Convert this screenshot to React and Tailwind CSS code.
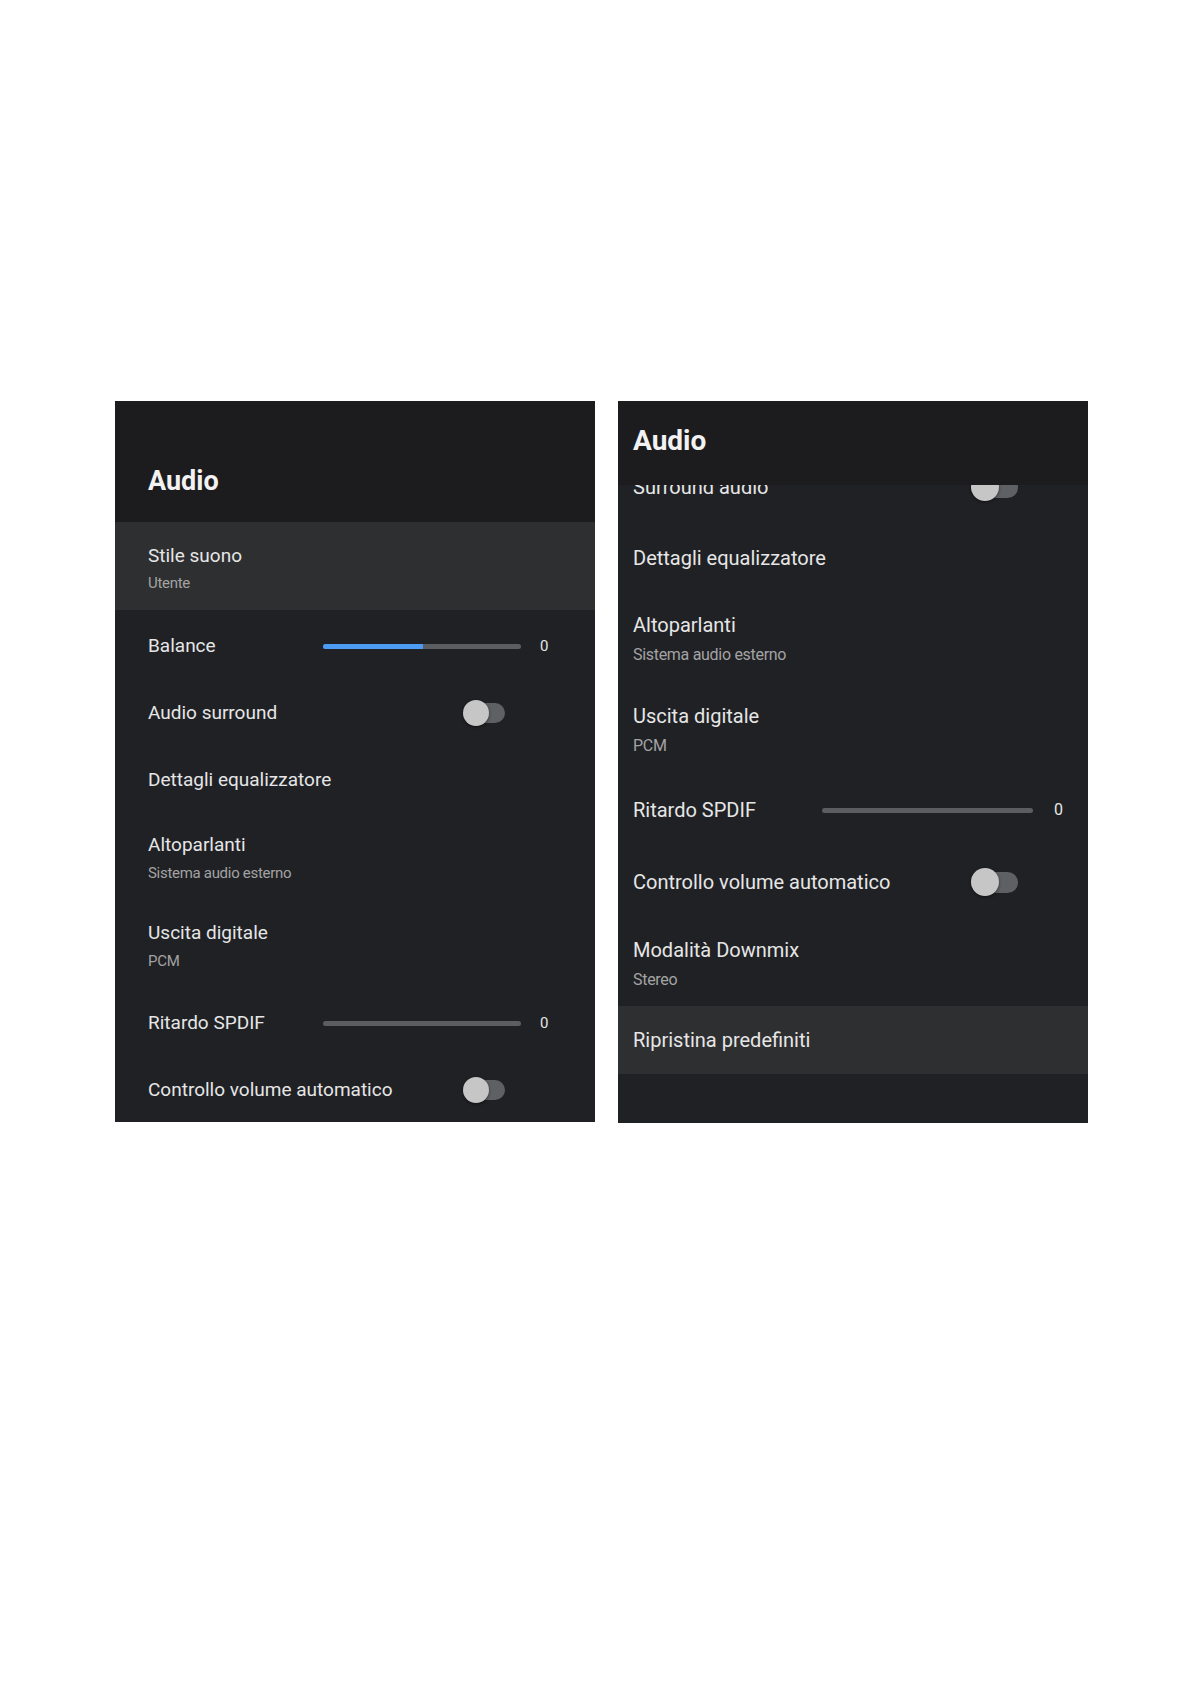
import React from 'react';

const font = { fontFamily: 'Roboto, "Noto Sans", sans-serif' };

function Toggle({ big }) {
  return big ? (
    <div className="relative w-[47px] h-[28px]">
      <div className="absolute left-[14px] top-[4px] w-[33px] h-[21px] rounded-full bg-[#5f6064]"></div>
      <div className="absolute left-0 top-0 w-[28px] h-[28px] rounded-full bg-[#c6c6c6] shadow-[0_1px_3px_rgba(0,0,0,0.5)]"></div>
    </div>
  ) : (
    <div className="relative w-[42px] h-[26px]">
      <div className="absolute left-[13px] top-[3px] w-[29px] h-[20px] rounded-full bg-[#5f6064]"></div>
      <div className="absolute left-0 top-0 w-[26px] h-[26px] rounded-full bg-[#c6c6c6] shadow-[0_1px_3px_rgba(0,0,0,0.5)]"></div>
    </div>
  );
}

function LeftPanel() {
  return (
    <div className="w-[480px] h-[721px] bg-[#202125] flex flex-col overflow-hidden" style={font}>
      <div className="h-[121px] bg-[#1c1c1e] pt-[64px] pl-[33px] shrink-0">
        <div className="text-[27px] leading-[32px] font-bold text-[#f2f2f2]">Audio</div>
      </div>

      <div className="h-[88px] bg-[#2e2f31] pl-[33px] pt-[5px] flex flex-col justify-center">
        <div className="text-[19px] leading-[22px] text-[#e6e6e6]">Stile suono</div>
        <div className="text-[15px] leading-[18px] text-[#a3a3a3] mt-[7px] tracking-[-0.3px]">Utente</div>
      </div>

      <div className="h-[70px] pl-[33px] pt-[2px] flex items-center">
        <div className="w-[175px] text-[19px] text-[#e6e6e6]">Balance</div>
        <div className="w-[198px] h-[5px] bg-[#5c5d60] rounded-full flex">
          <div className="w-[100px] h-[5px] bg-[#4b9cf2] rounded-l-full"></div>
        </div>
        <div className="ml-[19px] text-[15px] text-[#e6e6e6]">0</div>
      </div>

      <div className="h-[66px] pl-[33px] flex items-center">
        <div className="w-[315px] text-[19px] text-[#e6e6e6]">Audio surround</div>
        <Toggle />
      </div>

      <div className="h-[66px] pl-[33px] pt-[2px] flex items-center">
        <div className="text-[19px] text-[#e6e6e6]">Dettagli equalizzatore</div>
      </div>

      <div className="h-[88px] pl-[33px] pt-[4px] flex flex-col justify-center">
        <div className="text-[19px] leading-[22px] text-[#e6e6e6]">Altoparlanti</div>
        <div className="text-[15px] leading-[18px] text-[#a3a3a3] mt-[8px] tracking-[-0.3px]">Sistema audio esterno</div>
      </div>

      <div className="h-[88px] pl-[33px] pt-[4px] flex flex-col justify-center">
        <div className="text-[19px] leading-[22px] text-[#e6e6e6]">Uscita digitale</div>
        <div className="text-[15px] leading-[18px] text-[#a3a3a3] mt-[8px] tracking-[-0.3px]">PCM</div>
      </div>

      <div className="h-[70px] pl-[33px] flex items-center">
        <div className="w-[175px] text-[19px] text-[#e6e6e6]">Ritardo SPDIF</div>
        <div className="w-[198px] h-[5px] bg-[#5c5d60] rounded-full"></div>
        <div className="ml-[19px] text-[15px] text-[#e6e6e6]">0</div>
      </div>

      <div className="h-[64px] pl-[33px] flex items-center">
        <div className="w-[315px] text-[19px] text-[#e6e6e6]">Controllo volume automatico</div>
        <Toggle />
      </div>
    </div>
  );
}

function RightPanel() {
  return (
    <div className="w-[470px] h-[722px] bg-[#202125] flex flex-col overflow-hidden" style={font}>
      <div className="h-[84px] bg-[#1c1c1e] pt-[23px] pl-[15px] shrink-0 relative z-10">
        <div className="text-[28px] leading-[33px] font-bold text-[#f2f2f2]">Audio</div>
      </div>

      <div className="flex-1 overflow-hidden">
        <div className="-mt-[31px] flex flex-col">
          <div className="h-[66px] pl-[15px] flex items-center">
            <div className="w-[338px] text-[20px] text-[#e6e6e6]">Surround audio</div>
            <Toggle big />
          </div>

          <div className="h-[76px] pl-[15px] flex items-center">
            <div className="text-[20px] text-[#e6e6e6]">Dettagli equalizzatore</div>
          </div>

          <div className="h-[90px] pl-[15px] pb-[4px] flex flex-col justify-center">
            <div className="text-[20px] leading-[23px] text-[#e6e6e6]">Altoparlanti</div>
            <div className="text-[16px] leading-[19px] text-[#a3a3a3] mt-[8px] tracking-[-0.3px]">Sistema audio esterno</div>
          </div>

          <div className="h-[88px] pl-[15px] flex flex-col justify-center">
            <div className="text-[20px] leading-[23px] text-[#e6e6e6]">Uscita digitale</div>
            <div className="text-[16px] leading-[19px] text-[#a3a3a3] mt-[8px] tracking-[-0.3px]">PCM</div>
          </div>

          <div className="h-[72px] pl-[15px] flex items-center">
            <div className="w-[189px] text-[20px] text-[#e6e6e6]">Ritardo SPDIF</div>
            <div className="w-[211px] h-[5px] bg-[#5c5d60] rounded-full"></div>
            <div className="ml-[21px] text-[16px] text-[#e6e6e6]">0</div>
          </div>

          <div className="h-[72px] pl-[15px] flex items-center">
            <div className="w-[338px] text-[20px] text-[#e6e6e6]">Controllo volume automatico</div>
            <Toggle big />
          </div>

          <div className="h-[88px] pl-[15px] pt-[3px] flex flex-col justify-center">
            <div className="text-[20px] leading-[23px] text-[#e6e6e6]">Modalità Downmix</div>
            <div className="text-[16px] leading-[19px] text-[#a3a3a3] mt-[8px] tracking-[-0.3px]">Stereo</div>
          </div>

          <div className="h-[68px] pl-[15px] bg-[#2e2f31] flex items-center">
            <div className="text-[20px] text-[#e6e6e6]">Ripristina predefiniti</div>
          </div>
        </div>
      </div>
    </div>
  );
}

export default function App() {
  return (
    <div className="w-[1191px] h-[1684px] bg-white">
      <div className="flex gap-[23px] pt-[401px] pl-[115px]">
        <LeftPanel />
        <RightPanel />
      </div>
    </div>
  );
}
